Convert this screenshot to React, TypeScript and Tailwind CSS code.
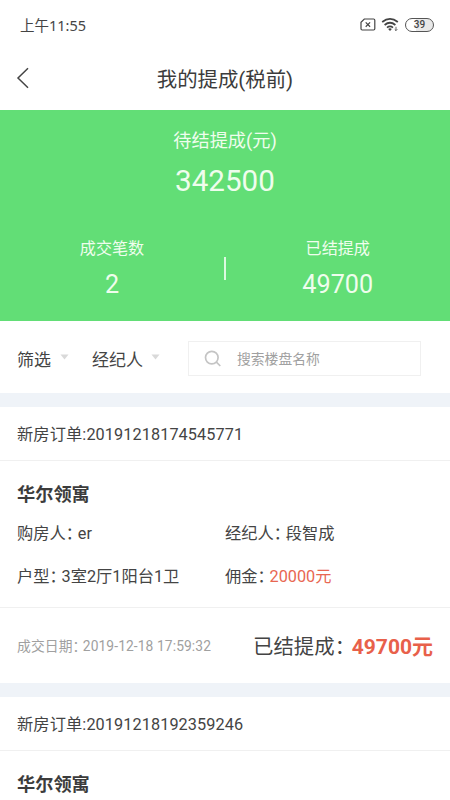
import React from "react";

type Details = {
  buyer: string;
  agent: string;
  layout: string;
  commission: string;
  date: string;
  settled: string;
};

type Order = { id: string; project: string; details?: Details };

const orders: Order[] = [
  {
    id: "20191218174545771",
    project: "华尔领寓",
    details: {
      buyer: "er",
      agent: "段智成",
      layout: "3室2厅1阳台1卫",
      commission: "20000元",
      date: "2019-12-18 17:59:32",
      settled: "49700元",
    },
  },
  { id: "20191218192359246", project: "华尔领寓" },
];

function Colon() {
  return <span className="tracking-[-0.26em]">：</span>;
}

function StatusBar() {
  return (
    <div className="flex h-[50px] shrink-0 items-center justify-between pr-[16px] pl-[20px]">
      <span className="font-['Noto_Sans','Noto_Sans_CJK_SC',sans-serif] text-[14.5px] leading-none text-[#444]">
        上午11:55
      </span>
      <div className="flex items-center pb-px text-[#444]">
        <svg width="16" height="13" viewBox="0 0 16 13" fill="none" stroke="currentColor">
          <path d="M4.3 1H13.6Q14.8 1 14.8 2.2V10.8Q14.8 12 13.6 12H2.2Q1 12 1 10.8V4.3Z" strokeWidth="1.2" />
          <path d="M5.7 4.4L10.1 8.7M10.1 4.4L5.7 8.7" strokeWidth="1.2" />
        </svg>
        <svg className="ml-[5px]" width="19" height="15" viewBox="0 0 19 15" fill="none" stroke="currentColor">
          <path d="M1.2 5Q9 -1.2 16.8 5" strokeWidth="1.8" />
          <path d="M3.6 8Q9 3.6 14.4 8" strokeWidth="1.8" />
          <path d="M6 10.7Q9 8.2 12 10.7" strokeWidth="1.7" />
          <path d="M7.1 12Q9 10.6 10.9 12L9 14Z" fill="currentColor" stroke="none" />
          <path d="M15 9.8V13.6M13.7 12.3L15 13.6L16.3 12.3" strokeWidth="0.8" />
        </svg>
        <div className="ml-[5px] flex h-[14px] w-[29px] items-center justify-center rounded-full border border-[#555] bg-[linear-gradient(90deg,#fff_38%,#e9e9e9_38%)] text-[10px] leading-none font-medium">
          39
        </div>
      </div>
    </div>
  );
}

function Header() {
  return (
    <div className="grid h-[60px] shrink-0 grid-cols-[60px_1fr_60px] items-center pb-[4px]">
      <svg className="ml-[16px]" width="14" height="22" viewBox="0 0 14 22" fill="none" stroke="#444" strokeWidth="1.5">
        <path d="M12 1.2L2 11L12 20.8" />
      </svg>
      <h1 className="pt-[4px] text-center text-[20.4px] leading-none text-[#3c3c3c]">我的提成(税前)</h1>
    </div>
  );
}

function Summary() {
  return (
    <section className="flex h-[211px] shrink-0 flex-col bg-[#62de76] pt-px text-[#effded]">
      <div className="flex h-[60px] items-center justify-center text-[18.2px] leading-none">待结提成(元)</div>
      <div className="flex h-[22px] items-center justify-center text-[29.6px] leading-none">342500</div>
      <div className="mt-[45px] flex items-center">
        <div className="flex w-[224px] flex-col items-center">
          <div className="flex h-[22px] items-center text-[16.1px] leading-none">成交笔数</div>
          <div className="mt-[12px] flex h-[26px] items-center text-[25.2px] leading-none">2</div>
        </div>
        <div className="h-[23px] w-[1.5px] bg-[#dcf9e0]" />
        <div className="flex flex-1 flex-col items-center">
          <div className="flex h-[22px] items-center text-[16.1px] leading-none">已结提成</div>
          <div className="mt-[12px] flex h-[26px] items-center text-[25.2px] leading-none">49700</div>
        </div>
      </div>
    </section>
  );
}

function Caret() {
  return (
    <svg width="9" height="6" viewBox="0 0 9 6" fill="#d9d9d9">
      <path d="M0.5 0.5H8.5L4.5 5.5Z" />
    </svg>
  );
}

function Filters() {
  return (
    <div className="flex h-[72px] shrink-0 items-center pl-[17px] text-[17px] leading-none text-[#444]">
      <span className="mt-[6px]">筛选</span>
      <span className="ml-[9px]"><Caret /></span>
      <span className="mt-[6px] ml-[23px]">经纪人</span>
      <span className="ml-[8px]"><Caret /></span>
      <div className="mt-[3px] ml-[28px] flex h-[35px] w-[233px] items-center border border-[#f0f0f0] pl-[15px] text-[13.8px] text-[#a0a0a0]">
        <svg width="18" height="18" viewBox="0 0 18 18" fill="none" stroke="#c4c4c4" strokeWidth="1.7">
          <circle cx="7.8" cy="7.6" r="6.3" />
          <path d="M12.4 12.2L16.3 16" />
        </svg>
        <span className="mt-[2px] ml-[15px]">搜索楼盘名称</span>
      </div>
    </div>
  );
}

function OrderCard({ order }: { order: Order }) {
  const d = order.details;
  return (
    <article className="shrink-0 border-t-[14px] border-[#eff3f8] text-[16.25px] leading-none text-[#444]">
      <div className="flex h-[54px] items-center border-b border-[#f0f0f0] px-[17px] pt-[4px] tracking-[0.09px]">
        新房订单:{order.id}
      </div>
      <div className="px-[17px] pt-[21px]">
        <h2 className="flex h-[26px] items-center text-[18.2px] font-bold text-[#3c3c3c]">{order.project}</h2>
      </div>
      {d && (
        <>
          <div className="grid h-[100px] grid-cols-[208px_1fr] content-start gap-y-[23px] border-b border-[#f0f0f0] px-[17px] pt-[16px]">
            <div className="flex h-[20px] items-center"><span>购房人<Colon />{d.buyer}</span></div>
            <div className="flex h-[20px] items-center"><span>经纪人<Colon />{d.agent}</span></div>
            <div className="flex h-[20px] items-center"><span>户型<Colon />{d.layout}</span></div>
            <div className="flex h-[20px] items-center">
              <span>佣金<Colon /><span className="text-[#e86752]">{d.commission}</span></span>
            </div>
          </div>
          <div className="flex h-[75px] items-center justify-between px-[17px] pt-[3px]">
            <span className="text-[13.8px] tracking-[0.1px] text-[#a0a0a0]">成交日期<Colon />{d.date}</span>
            <span className="text-[20.4px]">
              已结提成<Colon /><span className="ml-[2px] text-[21px] font-bold text-[#e8604a]">{d.settled}</span>
            </span>
          </div>
        </>
      )}
    </article>
  );
}

export default function App() {
  return (
    <main className="flex h-[800px] w-[450px] flex-col overflow-hidden bg-white font-['Roboto','Noto_Sans_CJK_SC',sans-serif] whitespace-nowrap">
      <StatusBar />
      <Header />
      <Summary />
      <Filters />
      {orders.map((order) => (
        <OrderCard key={order.id} order={order} />
      ))}
    </main>
  );
}
